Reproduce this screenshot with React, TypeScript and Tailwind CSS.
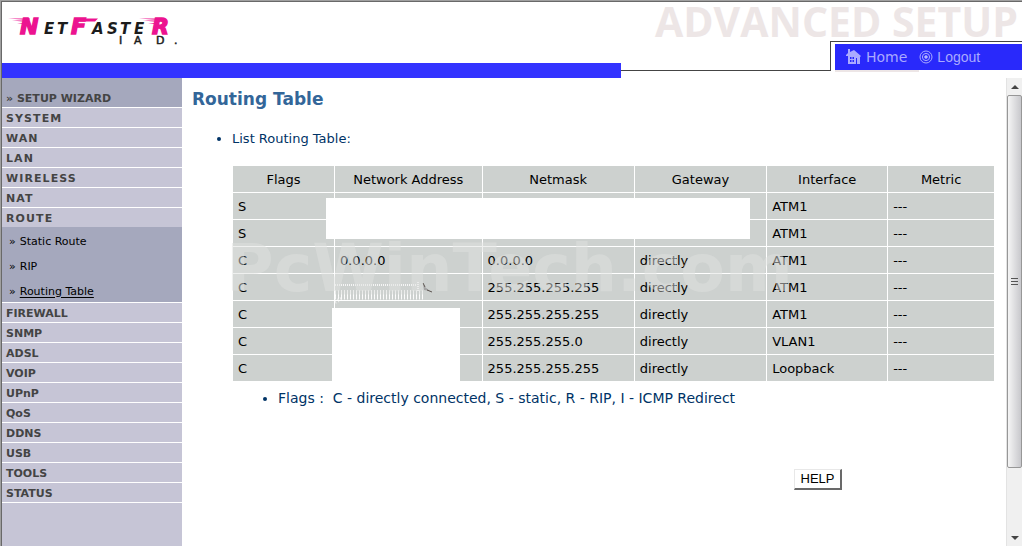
import React from 'react';

interface RouteRow {
  flag: string;
  address: string;
  netmask: string;
  gateway: string;
  iface: string;
}

const columns = ['Flags', 'Network Address', 'Netmask', 'Gateway', 'Interface', 'Metric'];

const rows: RouteRow[] = [
  { flag: 'S', address: '', netmask: '', gateway: '', iface: 'ATM1' },
  { flag: 'S', address: '', netmask: '', gateway: '', iface: 'ATM1' },
  { flag: 'C', address: '0.0.0.0', netmask: '0.0.0.0', gateway: 'directly', iface: 'ATM1' },
  { flag: 'C', address: '', netmask: '255.255.255.255', gateway: 'directly', iface: 'ATM1' },
  { flag: 'C', address: '', netmask: '255.255.255.255', gateway: 'directly', iface: 'ATM1' },
  { flag: 'C', address: '', netmask: '255.255.255.0', gateway: 'directly', iface: 'VLAN1' },
  { flag: 'C', address: '', netmask: '255.255.255.255', gateway: 'directly', iface: 'Loopback' },
];

const topMenu = ['SYSTEM', 'WAN', 'LAN', 'WIRELESS', 'NAT'];
const bottomMenu = ['FIREWALL', 'SNMP', 'ADSL', 'VOIP', 'UPnP', 'QoS', 'DDNS', 'USB', 'TOOLS', 'STATUS'];
const routeMenu = ['Static Route', 'RIP', 'Routing Table'];

const Logo: React.FC = () => (
  <svg
    width="176"
    height="34"
    viewBox="0 0 176 34"
    role="img"
    aria-label="NetFaster IAD"
    className="font-['DejaVu_Sans'] font-bold italic"
  >
    <g fill="#ec1390">
      <path d="M0 4.500h22l-1 1.500zM4 6.500h17l-1 1.500zM9 9h11l-1 1.500z" />
      <path d="M70 4.500h20l-3 3H72zM131 4.500h22l-2 1.500zM135 6.500h17l-1 1.500zM140 9h11l-1 1.500z" />
      <text x="12" y="20" fontSize="22" stroke="#ec1390" strokeWidth="1.5">N</text>
      <text x="63" y="20" fontSize="22" stroke="#ec1390" strokeWidth="1.5">F</text>
      <text x="144" y="20" fontSize="22" stroke="#ec1390" strokeWidth="1.5">R</text>
    </g>
    <g fill="#1c1c1c" fontSize="15">
      <text x="36" y="20">E</text>
      <text x="49" y="20">T</text>
      <text x="84" y="20">A</text>
      <text x="99" y="20">S</text>
      <text x="112" y="20">T</text>
      <text x="126" y="20">E</text>
    </g>
    <g fill="#1c1c1c" fontSize="11" fontStyle="normal" fontWeight="400" stroke="#1c1c1c" strokeWidth="0.5">
      <text x="111" y="30">I</text>
      <text x="126" y="30">A</text>
      <text x="148" y="30">D</text>
      <text x="166" y="30">.</text>
    </g>
  </svg>
);

const HomeIcon: React.FC = () => (
  <svg width="17" height="16" viewBox="0 0 17 16" fill="#aaaaff" aria-hidden="true">
    <path d="M3 0h2v3l4-2 7 6-1 1v7h-3V9h-1v6H3V7H1V6l2-2z" />
    <path d="M5 8h4v5H5z" fill="#2929fb" />
    <path d="M6.500 8h1v5h-1zM5 10h4v1H5z" />
  </svg>
);

const LogoutIcon: React.FC = () => (
  <svg width="14" height="14" viewBox="0 0 14 14" fill="none" stroke="#aaaaff" aria-hidden="true">
    <circle cx="7" cy="7" r="6" />
    <circle cx="7" cy="7" r="3.600" />
    <circle cx="7" cy="7" r="1.300" fill="#ccccff" />
  </svg>
);

const Header: React.FC = () => (
  <header className="flex">
    <div className="flex flex-1 flex-col">
      <div className="h-[61px] pt-3 pl-1.5">
        <Logo />
      </div>
      <div className="h-[15px] bg-[#3333ff]" />
    </div>
    <div className="w-[401px]">
      <div className="h-[39px] pr-1 text-right font-['Open_Sans',sans-serif] text-[41px] leading-[39px] font-bold whitespace-nowrap text-[#ede6e6]">
        ADVANCED SETUP
      </div>
      <div className="flex h-[30px]">
        <div className="w-[209px] border-b border-[#444444]" />
        <div className="flex-1 border-t border-l border-[#444444] pt-0.5 pl-1">
          <nav className="flex h-[26px] items-center bg-[#2929fb] pl-2.5 text-[#aaaaff]">
            <a href="#home" className="flex items-center gap-1 text-[14px]">
              <HomeIcon />
              Home
            </a>
            <a href="#logout" className="ml-3 flex items-center gap-1 font-['Liberation_Sans',sans-serif] text-[14px]">
              <LogoutIcon />
              Logout
            </a>
          </nav>
          <div className="h-0.5 w-21 bg-[#ede6e6]" />
        </div>
      </div>
    </div>
  </header>
);

const Sidebar: React.FC = () => (
  <nav className="w-[180px] shrink-0 bg-[#c6c5d6] text-[11px] leading-4 text-[#444444]">
    <a href="#wizard" className="block border-b border-white bg-[#a5a8bd] pt-[13px] pl-1 font-bold">
      » SETUP WIZARD
    </a>
    {topMenu.map((item) => (
      <a key={item} href={`#${item}`} className="block border-b border-white pt-[3px] pl-1 font-bold tracking-widest">
        {item}
      </a>
    ))}
    <a href="#ROUTE" className="block pt-[3px] pl-1 font-bold tracking-widest">
      ROUTE
    </a>
    <ul className="border-b border-white bg-[#a5a8bd] pl-[7px] text-black">
      {routeMenu.map((item) => (
        <li key={item} className="flex h-[25px] items-center gap-1 pt-1">
          <span>»</span>
          <a href={`#${item}`} className={item === 'Routing Table' ? 'underline underline-offset-2' : ''}>
            {item}
          </a>
        </li>
      ))}
    </ul>
    {bottomMenu.map((item) => (
      <a key={item} href={`#${item}`} className="block border-b border-white pt-[3px] pl-1 font-bold">
        {item}
      </a>
    ))}
  </nav>
);

const RoutingTable: React.FC = () => (
  <div className="relative mt-[17px] ml-[41px]">
    <table className="w-full table-fixed border-separate border-spacing-0 bg-[#cdd1cf] text-[13px] leading-[18px] text-black">
      <colgroup>
        <col className="w-[13.4%]" />
        <col className="w-[19.4%]" />
        <col className="w-[20%]" />
        <col className="w-[17.4%]" />
        <col className="w-[15.900%]" />
        <col />
      </colgroup>
      <thead>
        <tr>
          {columns.map((column) => (
            <th key={column} className="h-[27px] border-r border-b border-white px-0 pt-0.5 pb-0 font-normal last:border-r-0">
              {column}
            </th>
          ))}
        </tr>
      </thead>
      <tbody>
        {rows.map((row, index) => (
          <tr key={index} className="*:h-[27px] *:border-r *:border-b *:border-white *:pt-0.5 *:pb-0 *:pl-[5px] *:last:border-r-0">
            <td>{row.flag}</td>
            <td>{row.address}</td>
            <td>{row.netmask}</td>
            <td>{row.gateway}</td>
            <td>{row.iface}</td>
            <td>---</td>
          </tr>
        ))}
      </tbody>
    </table>

    {/* blanked out addresses */}
    <div className="absolute top-8 left-[93px] h-[41px] w-[424px] bg-white" />
    <div className="absolute top-[142px] left-[99px] h-[74px] w-32 bg-white" />
    <svg className="absolute top-28 left-[102px]" width="100" height="28" viewBox="0 0 100 28" aria-hidden="true">
      <path d="M0 7h82M83 4v9" stroke="#ffffff" strokeWidth="2" strokeDasharray="1 1" opacity="0.8" />
      <path d="M0 15h88" stroke="#ffffff" strokeWidth="6" strokeDasharray="1 2" opacity="0.6" />
      <path d="M0 19h88" stroke="#ffffff" strokeWidth="5" strokeDasharray="1 2" opacity="0.9" />
      <path d="M0 24L8 20" stroke="#ffffff" strokeWidth="4" strokeDasharray="1 2" opacity="0.6" />
      <path d="M88 5l2 4 5 4-6-1z" fill="#a3a3a3" />
      <path d="M88 5l2 4M92 12l5 2" stroke="#5c5450" />
    </svg>
    <div className="pointer-events-none absolute top-[66px] left-[-7px] text-[65px] leading-[74px] font-bold text-[#dfe1e0]/50">
      PcWinTech.com
    </div>
  </div>
);

const ScrollBar: React.FC = () => (
  <div className="flex w-4 shrink-0 flex-col border-l border-[#e3e3e3] bg-[#f0f0f0]" aria-hidden="true">
    <div className="flex h-[17px] items-center justify-center">
      <svg width="8" height="4" viewBox="0 0 8 4" fill="#444444">
        <path d="M4 0l4 4H0z" />
      </svg>
    </div>
    <div className="flex grow-6 items-center justify-center rounded-xs border border-[#979797] bg-linear-to-r from-[#f5f5f5] to-[#c8c8cc]">
      <svg width="7" height="8" viewBox="0 0 7 8" stroke="#555555">
        <path d="M0 .5h7M0 3.500h7M0 6.500h7" />
      </svg>
    </div>
    <div className="grow" />
    <div className="flex h-[17px] items-center justify-center">
      <svg width="8" height="4" viewBox="0 0 8 4" fill="#444444">
        <path d="M0 0h8L4 4z" />
      </svg>
    </div>
  </div>
);

const App: React.FC = () => {
  return (
    <div className="flex min-h-screen border-t border-l border-[#a0a0a0] bg-white font-['DejaVu_Sans',sans-serif]">
      <div className="flex flex-1 flex-col border-t border-l border-[#696969]">
        <Header />
        <div className="flex flex-1">
          <Sidebar />
          <main className="flex-1 pt-[9px] pr-3 pl-2.5 text-[13px] leading-5 text-[#003366]">
            <h1 className="text-[17px] leading-6 font-bold text-[#336699]">Routing Table</h1>
            <ul className="mt-[18px] list-disc pl-10">
              <li>List Routing Table:</li>
            </ul>
            <RoutingTable />
            <ul className="mt-1.5 list-disc pl-[86px] text-[14px]">
              <li>Flags :&nbsp; C - directly connected, S - static, R - RIP, I - ICMP Redirect</li>
            </ul>
            <div className="mt-[61px] flex justify-end pr-38">
              <button
                type="button"
                className="h-[21px] w-12 border-t border-r-2 border-b-2 border-l border-t-[#e8e8e8] border-r-[#696969] border-b-[#696969] border-l-[#e8e8e8] bg-white font-['Liberation_Sans',sans-serif] text-[13px] leading-4 text-black"
              >
                HELP
              </button>
            </div>
          </main>
          <ScrollBar />
        </div>
      </div>
    </div>
  );
};

export default App;
